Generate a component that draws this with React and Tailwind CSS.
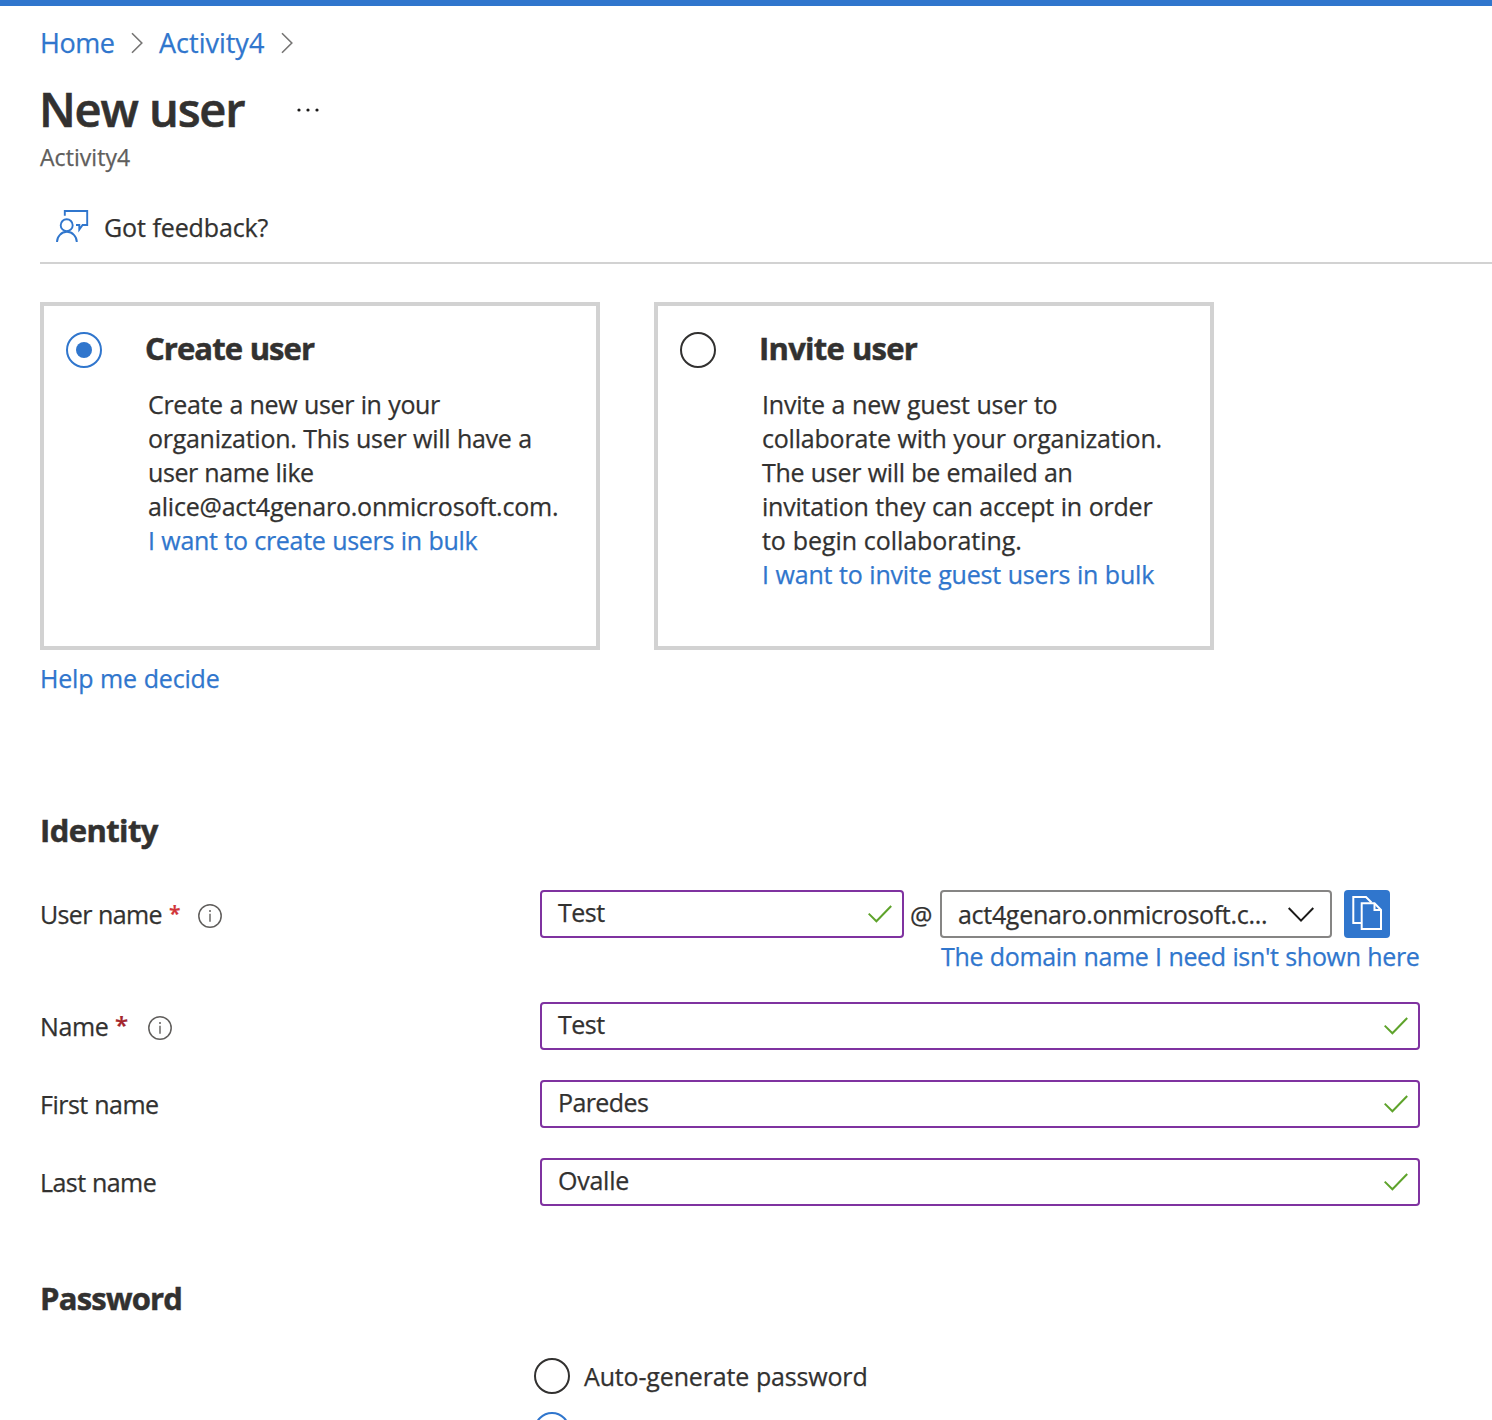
function Chevron({ className = "" }) {
  return (
    <svg width="12" height="22" viewBox="0 0 12 22" fill="none" className={className}>
      <path d="M1 1.2 10.8 11 1 20.8" stroke="#767574" strokeWidth="1.6" />
    </svg>
  );
}

function Check({ className = "" }) {
  return (
    <svg width="24" height="18" viewBox="0 0 24 18" fill="none" className={className}>
      <path d="M.7 8.6 8.4 16.3 23.2 1" stroke="#5ea32b" strokeWidth="2" />
    </svg>
  );
}

function Info({ className = "" }) {
  return (
    <svg width="24" height="24" viewBox="0 0 24 24" fill="none" className={className}>
      <circle cx="12" cy="12" r="11.2" stroke="#605e5c" strokeWidth="1.5" />
      <path d="M12 9.8v8" stroke="#605e5c" strokeWidth="1.4" />
      <circle cx="12" cy="7" r="1" fill="#605e5c" />
    </svg>
  );
}

function Radio({ checked = false, className = "" }) {
  return (
    <span
      className={
        "flex size-9 shrink-0 items-center justify-center rounded-full border-2 " +
        (checked ? "border-[#3076cd] " : "border-[#323130] ") +
        className
      }
    >
      {checked && <span className="size-4 rounded-full bg-[#3076cd]" />}
    </span>
  );
}

function Line({ children, className = "" }) {
  return <div className={"leading-[34px] whitespace-nowrap " + className}>{children}</div>;
}

function Card({ title, titleClass, checked, children }) {
  return (
    <section className="flex h-[348px] w-[560px] border-4 border-[#d2d2d2] pl-[22px]">
      <Radio checked={checked} className="mt-[26px]" />
      <div className="ml-[43px] pt-[22px]">
        <h2 className={"text-[31px] leading-10 font-bold whitespace-nowrap [-webkit-text-stroke:0.5px] " + titleClass}>
          {title}
        </h2>
        <div className="mt-[19px] ml-[3px]">{children}</div>
      </div>
    </section>
  );
}

function Input({ value, className = "", textClass = "" }) {
  return (
    <div
      className={
        "flex h-12 items-start justify-between rounded-[4px] border-2 border-[#7f32a0] pt-[3px] pr-[10px] pl-4 " +
        className
      }
    >
      <Line className={textClass}>{value}</Line>
      <Check className="mt-[10px]" />
    </div>
  );
}

export default function App() {
  return (
    <main className="h-[1420px] w-[1492px] overflow-hidden bg-white font-['Open_Sans',sans-serif] text-[25px] text-[#323130] [-webkit-text-stroke:0.25px] [word-spacing:0.45px]">
      <div className="h-1.5 bg-[#3076cd]" />
      <div className="pl-10">
        <nav className="mt-[19px] flex h-9 items-center text-[27px] leading-9 text-[#3076cd]">
          <a className="w-[91px] tracking-[-0.45px]">Home</a>
          <Chevron />
          <a className="ml-4 w-[122px]">Activity4</a>
          <Chevron />
        </nav>

        <div className="mt-4 flex h-16 items-center">
          <h1 className="-ml-px w-[258px] text-[47px] leading-[64px] font-semibold tracking-[-1.22px] whitespace-nowrap [-webkit-text-stroke:0.6px]">
            New user
          </h1>
          <svg width="24" height="4" viewBox="0 0 24 4" className="mt-px" fill="#1b1a19">
            <circle cx="2" cy="2" r="1.6" />
            <circle cx="11" cy="2" r="1.6" />
            <circle cx="20" cy="2" r="1.6" />
          </svg>
        </div>
        <div className="text-[23px] leading-8 tracking-[0.05px] text-[#605e5c]">Activity4</div>

        <div className="mt-[37px] flex h-[54px] items-start border-b-2 border-[#d2d2d2] pl-4">
          <svg width="34" height="34" viewBox="0 0 34 34" fill="none" stroke="#3076cd" strokeWidth="1.9">
            <path d="M8.8 5.8V1H31.2V15H26.6L23.3 19.6V15H20" />
            <circle cx="10.7" cy="15.2" r="6" />
            <path d="M1 32A9.9 10.2 0 0 1 20.8 32" />
          </svg>
          <Line className="ml-[14px] tracking-[-0.14px]">Got feedback?</Line>
        </div>

        <div className="mt-[38px] flex gap-[54px]">
          <Card title="Create user" titleClass="tracking-[-0.93px]" checked>
            <Line className="tracking-[-0.34px]">Create a new user in your</Line>
            <Line className="tracking-[-0.28px]">organization. This user will have a</Line>
            <Line className="tracking-[-0.42px]">user name like</Line>
            <Line className="tracking-[-0.21px]">alice@act4genaro.onmicrosoft.com.</Line>
            <Line className="tracking-[-0.3px] text-[#3076cd]">I want to create users in bulk</Line>
          </Card>
          <Card title="Invite user" titleClass="tracking-[-0.73px]">
            <Line className="tracking-[-0.2px]">Invite a new guest user to</Line>
            <Line className="tracking-[-0.2px]">collaborate with your organization.</Line>
            <Line className="tracking-[-0.32px]">The user will be emailed an</Line>
            <Line className="tracking-[-0.22px]">invitation they can accept in order</Line>
            <Line className="tracking-[-0.06px]">to begin collaborating.</Line>
            <Line className="tracking-[-0.2px] text-[#3076cd]">I want to invite guest users in bulk</Line>
          </Card>
        </div>
        <Line className="mt-[11px] tracking-[-0.18px] text-[#3076cd]">Help me decide</Line>

        <h2 className="mt-[115px] text-[31px] leading-10 font-bold tracking-[-0.6px] [-webkit-text-stroke:0.5px]">
          Identity
        </h2>

        <div className="mt-10 flex h-[112px]">
          <div className="flex w-[500px] pt-[7px]">
            <Line className="w-[129px] tracking-[-0.65px]">User name</Line>
            <span className="w-[29px] text-[21px] leading-[32px] font-semibold text-[#d13438]">*</span>
            <Info className="mt-[7px]" />
          </div>
          <Input value="Test" className="w-[364px]" textClass="tracking-[-0.5px]" />
          <Line className="w-9 pt-2 pl-[6px]">@</Line>
          <div>
            <div className="flex">
              <div className="flex h-12 w-[392px] items-start justify-between rounded-[4px] border-2 border-[#868584] pt-[5px] pr-4 pl-4">
                <Line className="tracking-[-0.3px]">act4genaro.onmicrosoft.c...</Line>
                <svg width="26" height="16" viewBox="0 0 26 16" fill="none" className="mt-[10px]">
                  <path d="M.7 1 13 13.6 25.3 1" stroke="#1b1a19" strokeWidth="2" />
                </svg>
              </div>
              <div className="ml-3 flex h-12 w-[46px] items-start rounded-[4px] bg-[#3076cd] pt-[6px] pl-2">
                <svg width="32" height="36" viewBox="0 0 32 36" fill="none" stroke="white" strokeWidth="2">
                  <path d="M9 27H1.3V1H14L19.5 6.5" />
                  <path d="M9.7 7.3H22.5L29 14V33H9.7Z" />
                  <path d="M22.5 7.3V14H29" />
                </svg>
              </div>
            </div>
            <Line className="mt-px ml-px tracking-[-0.33px] text-[#3076cd]">The domain name I need isn't shown here</Line>
          </div>
        </div>

        <div className="flex h-[78px]">
          <div className="flex w-[500px] pt-[7px]">
            <Line className="w-[75px] tracking-[-0.35px]">Name</Line>
            <span className="w-[33px] text-[24px] leading-[32px] font-semibold text-[#a4262c]">*</span>
            <Info className="mt-[7px]" />
          </div>
          <Input value="Test" className="w-[880px]" textClass="tracking-[-0.5px]" />
        </div>
        <div className="flex h-[78px]">
          <Line className="w-[500px] pt-[7px] tracking-[-0.5px]">First name</Line>
          <Input value="Paredes" className="w-[880px]" textClass="tracking-[-0.6px]" />
        </div>
        <div className="flex h-12">
          <Line className="w-[500px] pt-[7px] tracking-[-0.55px]">Last name</Line>
          <Input value="Ovalle" className="w-[880px]" textClass="tracking-[-0.25px]" />
        </div>

        <h2 className="mt-[72px] text-[31px] leading-10 font-bold tracking-[-0.78px] [-webkit-text-stroke:0.5px]">
          Password
        </h2>

        <div className="mt-10 flex flex-col gap-[18px] pl-[494px]">
          <div className="flex h-9">
            <Radio />
            <Line className="mt-px ml-3.5 tracking-[-0.16px]">Auto-generate password</Line>
          </div>
          <Radio checked />
        </div>
      </div>
    </main>
  );
}
